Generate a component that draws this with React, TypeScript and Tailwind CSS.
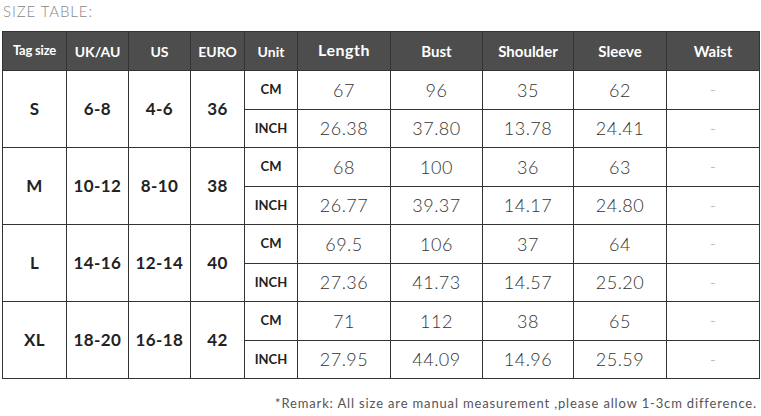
import React from "react";

type Row = { unit: string; vals: string[] };
type Group = { tag: string; uk: string; us: string; euro: string; rows: Row[] };

const groups: Group[] = [
    {tag: "S", uk: "6-8", us: "4-6", euro: "36", rows: [
        {unit: "CM", vals: ["67", "96", "35", "62", "-"]},
        {unit: "INCH", vals: ["26.38", "37.80", "13.78", "24.41", "-"]},
    ]},
    {tag: "M", uk: "10-12", us: "8-10", euro: "38", rows: [
        {unit: "CM", vals: ["68", "100", "36", "63", "-"]},
        {unit: "INCH", vals: ["26.77", "39.37", "14.17", "24.80", "-"]},
    ]},
    {tag: "L", uk: "14-16", us: "12-14", euro: "40", rows: [
        {unit: "CM", vals: ["69.5", "106", "37", "64", "-"]},
        {unit: "INCH", vals: ["27.36", "41.73", "14.57", "25.20", "-"]},
    ]},
    {tag: "XL", uk: "18-20", us: "16-18", euro: "42", rows: [
        {unit: "CM", vals: ["71", "112", "38", "65", "-"]},
        {unit: "INCH", vals: ["27.95", "44.09", "14.96", "25.59", "-"]},
    ]},
];

const headers = ["Tag size", "UK/AU", "US", "EURO", "Unit", "Length", "Bust", "Shoulder", "Sleeve", "Waist"];
const widths = ["w-[64px]", "w-[62px]", "w-[62px]", "w-[54px]", "w-[53px]", "w-[93px]", "w-[92px]", "w-[91px]", "w-[93px]", "w-[93px]"];

export default function App() {
    return (
        <div className="w-[761px] h-[416px] bg-white font-['Lato','Liberation_Sans',sans-serif] relative">
            <div className="pl-[3px] pt-[1px] text-[15px] font-light tracking-[0.9px] text-[#888] leading-[20px]">SIZE TABLE:</div>
            <table className="ml-[2px] mt-[10px] border-collapse table-fixed w-[758px]">
                <colgroup>
                    {widths.map((w, i) => <col key={i} className={w}/>)}
                </colgroup>
                <thead>
                    <tr className="h-[39px] bg-[#4d4d4d]">
                        {headers.map((h, i) => (
                            <th key={h}
                                className={`border border-[#333] text-white font-bold text-center p-0 ${i === 0 ? "text-[13px] tracking-[-0.2px]" : i < 5 ? "text-[14px]" : h === "Length" ? "text-[16px] tracking-[0.5px] pb-[3px]" : "text-[15px]"}`}>
                                {h}
                            </th>
                        ))}
                    </tr>
                </thead>
                <tbody>
                    {groups.map((g) => g.rows.map((r, ri) => (
                        <tr key={g.tag + r.unit} className={ri === 0 ? "h-[39px]" : "h-[38px]"}>
                            {ri === 0 && (
                                <>
                                    <td rowSpan={2} className="border border-[#333] text-center text-[17px] font-bold tracking-[0.4px] text-[#222] p-0">{g.tag}</td>
                                    <td rowSpan={2} className="border border-[#333] text-center text-[17px] font-bold tracking-[0.4px] text-[#222] p-0">{g.uk}</td>
                                    <td rowSpan={2} className="border border-[#333] text-center text-[17px] font-bold tracking-[0.4px] text-[#222] p-0">{g.us}</td>
                                    <td rowSpan={2} className="border border-[#333] text-center text-[17px] font-bold tracking-[0.4px] text-[#222] p-0">{g.euro}</td>
                                </>
                            )}
                            <td className="border border-[#333] text-center text-[13px] font-bold text-[#222] p-0">{r.unit}</td>
                            {r.vals.map((v, vi) => (
                                <td key={vi}
                                    className={`border border-[#333] text-center p-0 font-light ${v === "-" ? "text-[17px] text-[#aaa]" : "text-[18px] tracking-[0.5px] text-[#333]"}`}>
                                    {v}
                                </td>
                            ))}
                        </tr>
                    )))}
                </tbody>
            </table>
            <div className="mt-[15px] pr-[4px] text-right text-[13px] text-[#555] tracking-[0.85px] leading-[18px]">
                *Remark: All size are manual measurement ,please allow 1-3cm difference.
            </div>
        </div>
    );
}
